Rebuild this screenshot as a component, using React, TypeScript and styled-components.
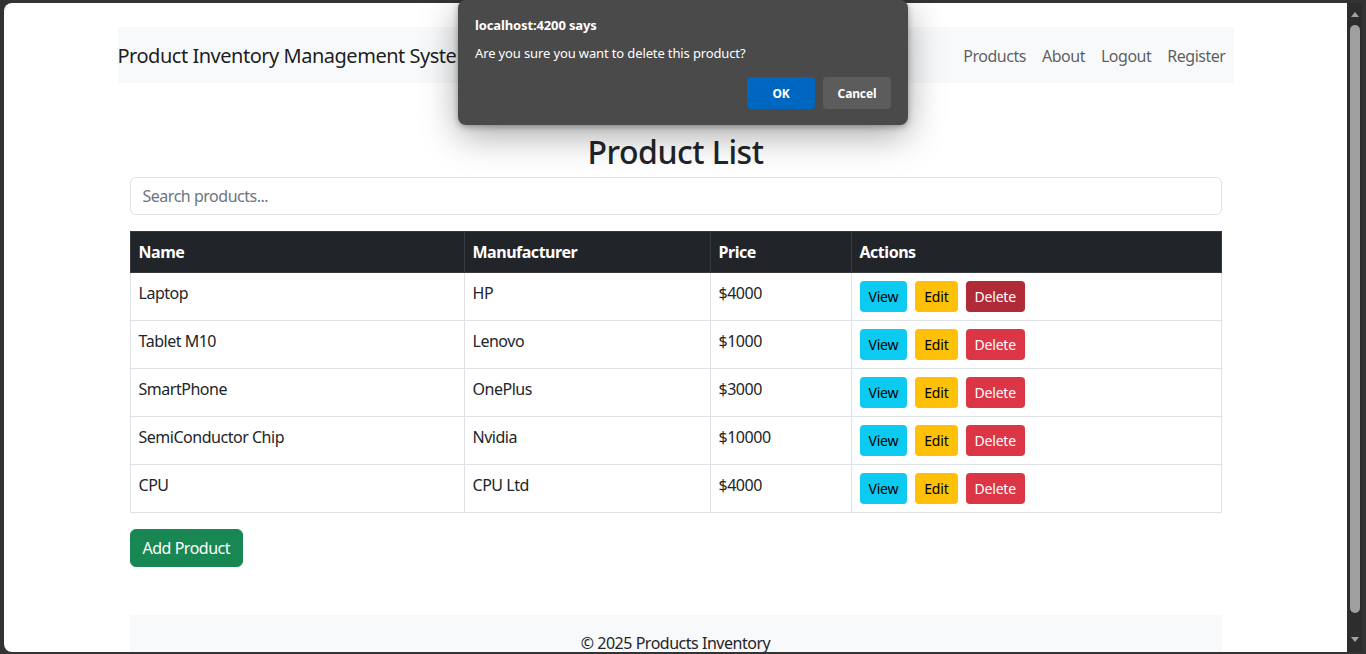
import styled, { createGlobalStyle } from "styled-components";

const GlobalStyle = createGlobalStyle`
  html, body {
    margin: 0;
    padding: 0;
    background: #333333;
    overflow: hidden;
  }
  body {
    font-family: "Noto Sans", "Open Sans", Arial, sans-serif;
    letter-spacing: -0.03em;
    color: #212529;
  }
  button, input {
    letter-spacing: inherit;
  }
  * {
    box-sizing: border-box;
  }
`;

const Frame = styled.div`
  position: relative;
  width: 1366px;
  height: 654px;
  padding: 3px 4px 2px 4px;
  display: flex;
`;

const Viewport = styled.div`
  flex: 0 0 1343px;
  background: #ffffff;
  border-radius: 8px 0 0 8px;
  overflow: hidden;
`;

const Scrollbar = styled.div`
  flex: 1;
  background: #2d2d2d;
  display: flex;
  flex-direction: column;
  align-items: center;
  padding-top: 9px;
`;

const Arrow = styled.div<{ $down?: boolean }>`
  width: 0;
  height: 0;
  border-left: 4.5px solid transparent;
  border-right: 4.5px solid transparent;
  ${(p) =>
    p.$down
      ? "border-top: 5px solid #a3a3a3; margin-top: 24px;"
      : "border-bottom: 5px solid #a3a3a3;"}
`;

const Thumb = styled.div`
  width: 10px;
  height: 588px;
  margin-top: 8px;
  background: #9f9f9f;
  border-radius: 5px;
`;

const Container = styled.div`
  width: 1140px;
  margin: 24px auto 0;
  padding: 0 12px;
`;

const Navbar = styled.nav`
  display: flex;
  justify-content: space-between;
  align-items: center;
  padding: 8px 0;
  background: #f8f9fa;
`;

const Brand = styled.a`
  font-size: 20px;
  line-height: 30px;
  padding: 6px 0 4px;
  color: rgba(0, 0, 0, 0.9);
  text-decoration: none;
`;

const NavList = styled.div`
  display: flex;
`;

const NavLink = styled.a`
  padding: 9px 8px 7px;
  font-size: 16px;
  line-height: 24px;
  color: rgba(0, 0, 0, 0.65);
  text-decoration: none;
`;

const Main = styled.main`
  margin-top: 48px;
  padding: 0 12px;
`;

const Title = styled.h2`
  margin: 0 0 8px;
  padding-top: 2px;
  height: 38px;
  text-align: center;
  font-size: 32px;
  font-weight: 500;
  line-height: 1.2;
`;

const Search = styled.input`
  display: block;
  width: 100%;
  height: 38px;
  margin-bottom: 16px;
  padding: 6px 12px;
  font: inherit;
  font-size: 16px;
  color: #212529;
  border: 1px solid #dee2e6;
  border-radius: 6px;
  outline: none;
  &::placeholder {
    color: #6c757d;
  }
`;

const Table = styled.table`
  width: 100%;
  table-layout: fixed;
  border-collapse: collapse;
  margin-bottom: 16px;
  border: 1px solid #dee2e6;
`;

const Th = styled.th<{ $w?: number }>`
  ${(p) => (p.$w ? `width: ${p.$w}px;` : "")}
  padding: 8px;
  text-align: left;
  font-size: 16px;
  font-weight: 700;
  line-height: 24px;
  color: #ffffff;
  background: #212529;
  border: 1px solid #373b3e;
`;

const Td = styled.td`
  padding: 8px;
  vertical-align: top;
  font-size: 16px;
  line-height: 24px;
  border: 1px solid #dee2e6;
`;

const Actions = styled.div`
  display: flex;
  gap: 8px;
`;

const SmallBtn = styled.button<{ $kind: "view" | "edit" | "delete"; $pressed?: boolean }>`
  padding: 4px 8px;
  font-family: inherit;
  font-size: 14px;
  line-height: 21px;
  letter-spacing: -0.015em;
  border: 1px solid transparent;
  border-radius: 4px;
  cursor: pointer;
  color: ${(p) => (p.$kind === "delete" ? "#ffffff" : "#000000")};
  background: ${(p) =>
    p.$kind === "view"
      ? "#0dcaf0"
      : p.$kind === "edit"
        ? "#ffc107"
        : p.$pressed
          ? "#b02a37"
          : "#dc3545"};
`;

const AddBtn = styled.button`
  padding: 6px 12px;
  font-family: inherit;
  font-size: 16px;
  line-height: 24px;
  color: #ffffff;
  background: #198754;
  border: 1px solid #198754;
  border-radius: 6px;
`;

const Footer = styled.footer`
  margin-top: 48px;
  padding: 16px;
  text-align: center;
  background: #f8f9fa;
  font-size: 16px;
  line-height: 24px;
`;

const Dialog = styled.div`
  position: absolute;
  left: 458px;
  top: 0;
  width: 450px;
  padding: 16px 17px;
  background: #4a4a4a;
  border-radius: 8px;
  box-shadow: 0 10px 36px rgba(0, 0, 0, 0.35), 0 2px 6px rgba(0, 0, 0, 0.3);
  color: #ffffff;
  font-size: 13px;
  line-height: 18px;
  letter-spacing: -0.01em;
`;

const DialogTitle = styled.div`
  font-weight: 700;
`;

const DialogText = styled.div`
  margin-top: 10px;
`;

const DialogButtons = styled.div`
  display: flex;
  justify-content: flex-end;
  gap: 8px;
  margin-top: 15px;
`;

const DialogBtn = styled.button<{ $primary?: boolean }>`
  width: 68px;
  height: 32px;
  font-family: inherit;
  font-size: 12px;
  font-weight: 700;
  color: #ffffff;
  border: none;
  border-radius: 4px;
  background: ${(p) => (p.$primary ? "#0067c0" : "#5c5c5c")};
`;

const products = [
  { name: "Laptop", maker: "HP", price: 4000 },
  { name: "Tablet M10", maker: "Lenovo", price: 1000 },
  { name: "SmartPhone", maker: "OnePlus", price: 3000 },
  { name: "SemiConductor Chip", maker: "Nvidia", price: 10000 },
  { name: "CPU", maker: "CPU Ltd", price: 4000 },
];

export default function App() {
  return (
    <>
      <GlobalStyle />
      <Frame>
        <Viewport>
          <Container>
            <Navbar>
              <Brand href="#">Product Inventory Management System</Brand>
              <NavList>
                <NavLink href="#">Products</NavLink>
                <NavLink href="#">About</NavLink>
                <NavLink href="#">Logout</NavLink>
                <NavLink href="#">Register</NavLink>
              </NavList>
            </Navbar>
            <Main>
              <Title>Product List</Title>
              <Search placeholder="Search products..." />
              <Table>
                <thead>
                  <tr>
                    <Th $w={334}>Name</Th>
                    <Th $w={246}>Manufacturer</Th>
                    <Th $w={141}>Price</Th>
                    <Th>Actions</Th>
                  </tr>
                </thead>
                <tbody>
                  {products.map((p, i) => (
                    <tr key={p.name}>
                      <Td>{p.name}</Td>
                      <Td>{p.maker}</Td>
                      <Td>${p.price}</Td>
                      <Td>
                        <Actions>
                          <SmallBtn $kind="view">View</SmallBtn>
                          <SmallBtn $kind="edit">Edit</SmallBtn>
                          <SmallBtn $kind="delete" $pressed={i === 0}>
                            Delete
                          </SmallBtn>
                        </Actions>
                      </Td>
                    </tr>
                  ))}
                </tbody>
              </Table>
              <AddBtn>Add Product</AddBtn>
              <Footer>© 2025 Products Inventory</Footer>
            </Main>
          </Container>
        </Viewport>
        <Scrollbar>
          <Arrow />
          <Thumb />
          <Arrow $down />
        </Scrollbar>
        <Dialog>
          <DialogTitle>localhost:4200 says</DialogTitle>
          <DialogText>Are you sure you want to delete this product?</DialogText>
          <DialogButtons>
            <DialogBtn $primary>OK</DialogBtn>
            <DialogBtn>Cancel</DialogBtn>
          </DialogButtons>
        </Dialog>
      </Frame>
    </>
  );
}
